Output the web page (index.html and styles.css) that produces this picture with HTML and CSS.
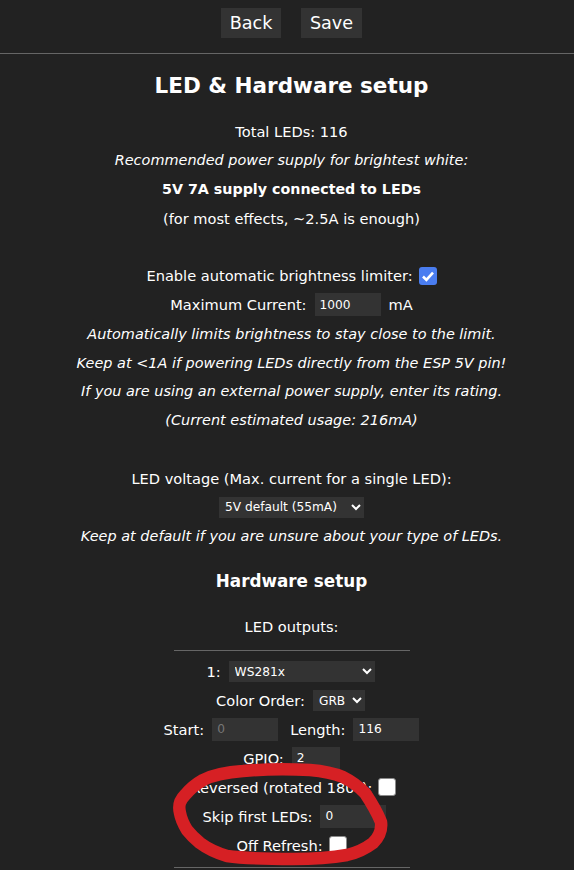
FILE: index.html
```html
<!DOCTYPE html>
<html lang="en">
<head>
<meta charset="utf-8">
<title>LED &amp; Hardware setup</title>
<link rel="stylesheet" href="styles.css">
</head>
<body>
<nav class="top">
  <button class="btn" type="button">Back</button>
  <button class="btn wide" type="button">Save</button>
</nav>
<hr class="rule-full">
<main class="page">
  <h2 class="title">LED &amp; Hardware setup</h2>
  <div class="row">Total LEDs: 116</div>
  <div class="row"><i>Recommended power supply for brightest white:</i></div>
  <div class="row"><b>5V 7A supply connected to LEDs</b></div>
  <div class="row">(for most effects, ~2.5A is enough)</div>
  <div class="row"></div>
  <div class="row">Enable automatic brightness limiter:
    <span class="check on"><svg viewBox="0 0 18 18" width="18" height="18"><path d="M4 9.5l3.4 3.4L14 5.6" fill="none" stroke="#fff" stroke-width="2.6"/></svg></span>
  </div>
  <div class="row">Maximum Current: <input class="num w66" type="text" value="1000"> mA</div>
  <div class="row"><i>Automatically limits brightness to stay close to the limit.</i></div>
  <div class="row"><i>Keep at &lt;1A if powering LEDs directly from the ESP 5V pin!</i></div>
  <div class="row"><i>If you are using an external power supply, enter its rating.</i></div>
  <div class="row"><i>(Current estimated usage: 216mA)</i></div>
  <div class="row"></div>
  <div class="row">LED voltage (Max. current for a single LED):</div>
  <div class="row"><select class="sel w145"><option>5V default (55mA)</option></select></div>
  <div class="row"><i>Keep at default if you are unsure about your type of LEDs.</i></div>
  <h3 class="sub">Hardware setup</h3>
  <div class="row">LED outputs:</div>
  <hr class="rule-short first">
  <div class="row">1: <select class="sel w146"><option>WS281x</option></select></div>
  <div class="row">Color Order: <select class="sel w52"><option>GRB</option></select></div>
  <div class="row nudge-1">Start: <input class="num w66 dim" type="text" value="0" disabled> <span class="gap">Length:</span> <input class="num w66" type="text" value="116"></div>
  <div class="row nudge-1">GPIO: <input class="num w48" type="text" value="2"></div>
  <div class="row nudge-2">Reversed (rotated 180°): <span class="check"></span></div>
  <div class="row nudge-4">Skip first LEDs: <input class="num w66" type="text" value="0"></div>
  <div class="row">Off Refresh: <span class="check"></span></div>
  <hr class="rule-short">
</main>
<svg class="scribble" viewBox="0 0 574 870" width="574" height="870" aria-hidden="true">
  <path d="M180 813C178 805 180 800 185 795C190 789 196 784 203 780C215 774 228 772 243 771C265 769 290 769 310 770C322 771 333 773 343 777C351 781 358 786 365 793C371 802 377 812 381 822C382 830 379 837 373 843C365 849 356 853 347 855C330 858 312 859 293 859C270 859 248 859 227 856C217 853 208 849 200 843C195 839 191 835 187 830C184 825 181 819 180 813Z" fill="none" stroke="#d62024" stroke-width="12.5" stroke-linejoin="round"/>
</svg>
</body>
</html>
```
FILE: styles.css
```css
html, body {
  margin: 0;
  padding: 0;
  height: 870px;
  overflow: hidden;
  background: #222;
}
body {
  position: relative;
  color: #fff;
  font-family: "DejaVu Sans", Verdana, sans-serif;
  font-size: 14.6px;
}
i { font-size: 14.45px; }
b { font-size: 14.25px; }
.top {
  width: 583px;
  display: flex;
  justify-content: center;
  gap: 20px;
  padding: 8px 0 15px;
}
.btn {
  height: 30px;
  width: 60px;
  padding: 0;
  border: 0;
  background: #333;
  color: #fff;
  font-family: inherit;
  font-size: 17.6px;
}
.wide { width: 61px; }
.rule-full {
  margin: 0;
  border: 0;
  height: 1px;
  background: #666;
}
.page {
  width: 583px;
  display: flex;
  flex-direction: column;
  align-items: stretch;
}
.title {
  margin: 18px 0 17px;
  height: 28px;
  line-height: 28px;
  font-size: 21.5px;
  font-weight: 700;
  text-align: center;
}
.sub {
  margin: 20px 0 20px;
  height: 22px;
  line-height: 22px;
  font-size: 16.8px;
  font-weight: 700;
  text-align: center;
}
.row {
  height: 28.9px;
  display: flex;
  align-items: center;
  justify-content: center;
  gap: 6px;
  white-space: nowrap;
}
.nudge-1 { padding-left: 2px; }
.nudge-2 { padding-left: 4px; }
.nudge-4 { padding-left: 8px; }
.num {
  box-sizing: border-box;
  height: 23px;
  padding: 0 5px;
  border: 0;
  background: #333;
  color: #fff;
  font-family: inherit;
  font-size: 12.2px;
  margin: 0 2px;
}
.dim { color: #777; }
.w66 { width: 66px; }
.w48 { width: 48px; }
.sel {
  box-sizing: border-box;
  height: 21px;
  border: 0;
  padding: 0 0 0 2px;
  background: #333;
  color: #fff;
  font-family: inherit;
  font-size: 12.2px;
  margin: 0 2px;
}
.w145 { width: 145px; }
.w146 { width: 146px; }
.w52 { width: 52px; }
.gap { margin-left: 4px; }
.check {
  box-sizing: border-box;
  display: inline-block;
  width: 18px;
  height: 18px;
  border-radius: 3px;
  background: #fff;
  border: 1px solid #8a8a8a;
  margin-left: 0;
  overflow: hidden;
}
.check.on {
  background: #4a7df0;
  border: 0;
}
.check svg { display: block; }
.rule-short {
  width: 236px;
  margin: 8px auto 7px;
  border: 0;
  height: 1px;
  background: #666;
  flex: none;
}
.rule-short.first { margin: 9px auto 6px; }
.scribble {
  position: absolute;
  left: 0;
  top: 0;
  pointer-events: none;
}
```
